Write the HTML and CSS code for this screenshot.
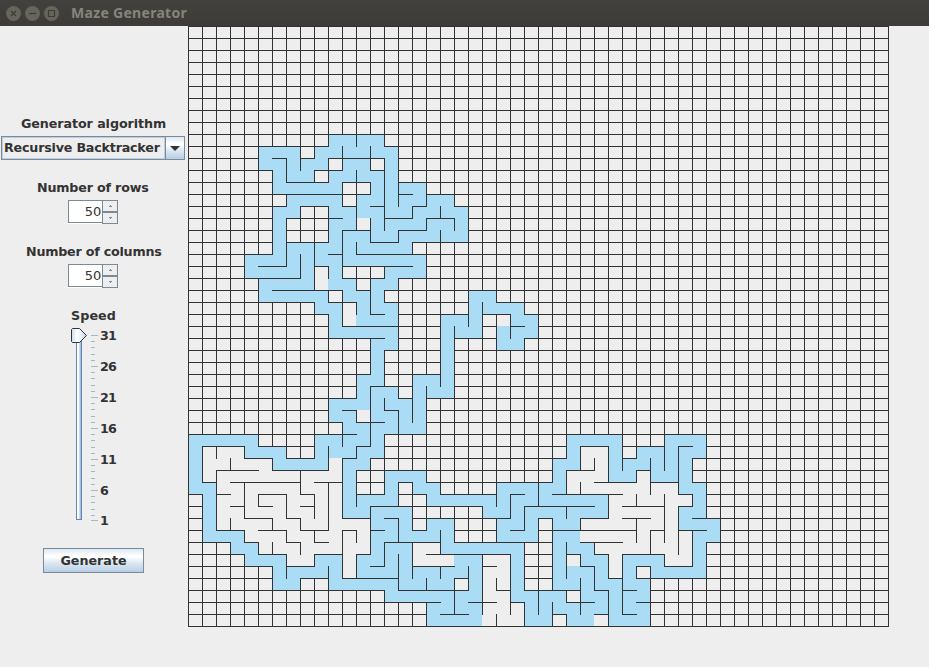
FILE: index.html
```html
<!DOCTYPE html>
<html lang="en">
<head>
<meta charset="utf-8">
<title>Maze Generator</title>
<link rel="stylesheet" href="styles.css">
</head>
<body>
<header class="titlebar">
  <svg class="window-buttons" width="54" height="16" viewBox="0 0 54 16">
    <g class="disc"><circle cx="7.5" cy="7.5" r="7.5"/><circle cx="26.5" cy="7.5" r="7.5"/><circle cx="45.5" cy="7.5" r="7.5"/></g>
    <g class="glyph"><path d="M5 5l5 5M10 5l-5 5"/><path d="M23 7.5h7"/><path d="M42.5 4.5h6v6h-6z"/></g>
  </svg>
  <h1 class="title">Maze Generator</h1>
</header>
<main class="content">
  <section class="controls">
    <label class="label label-algorithm">Generator algorithm</label>
    <div class="combo">
      <span class="combo-value">Recursive Backtracker</span>
      <span class="combo-button"><svg width="10" height="5" viewBox="0 0 10 5"><path d="M0 0h10L5 5z" fill="#333"/></svg></span>
    </div>
    <label class="label label-rows">Number of rows</label>
    <div class="spinner">
      <span class="spinner-value">50</span>
      <span class="spinner-buttons">
        <span class="spinner-button"><svg width="3" height="2"><path d="M1 0h1v1h1v1h-3v-1h1z"/></svg></span>
        <span class="spinner-button"><svg width="3" height="2"><path d="M0 0h3v1h-1v1h-1v-1h-1z"/></svg></span>
      </span>
    </div>
    <label class="label label-columns">Number of columns</label>
    <div class="spinner">
      <span class="spinner-value">50</span>
      <span class="spinner-buttons">
        <span class="spinner-button"><svg width="3" height="2"><path d="M1 0h1v1h1v1h-3v-1h1z"/></svg></span>
        <span class="spinner-button"><svg width="3" height="2"><path d="M0 0h3v1h-1v1h-1v-1h-1z"/></svg></span>
      </span>
    </div>
    <label class="label label-speed">Speed</label>
    <div class="slider">
      <svg class="slider-track" width="28" height="195" viewBox="0 0 28 195">
        <defs>
          <linearGradient id="thumb"><stop offset="0" stop-color="#c8ddf2"/><stop offset=".35" stop-color="#fff"/><stop offset=".6" stop-color="#eef4fa"/><stop offset="1" stop-color="#b8cfe5"/></linearGradient>
          <g id="step"><path d="M20 0h7v1h-7zM20 6h4v1h-4zM20 12h4v1h-4zM20 19h4v1h-4zM20 25h4v1h-4z"/></g>
        </defs>
        <g shape-rendering="crispEdges">
          <path fill="#6382bf" d="M5 8h6v184h-6z"/>
          <path fill="#fff" d="M6 8h2v183h-2z"/>
          <path fill="#c8ddea" d="M8 8h1v183h-1z"/>
          <path fill="#a3c0d6" d="M9 8h1v183h-1z"/>
          <g fill="#a3b8cc">
            <use href="#step" y="7"/><use href="#step" y="38"/><use href="#step" y="69"/><use href="#step" y="100"/><use href="#step" y="131"/><use href="#step" y="162"/>
            <path d="M20 192h7v1h-7z"/>
          </g>
        </g>
        <path fill="url(#thumb)" stroke="#333" d="M1.5 .5h7l7 7-7 7h-7l-1-1v-12z"/>
      </svg>
      <ol class="slider-labels">
        <li>31</li><li>26</li><li>21</li><li>16</li><li>11</li><li>6</li><li>1</li>
      </ol>
    </div>
    <button class="generate" type="button"><span>Generate</span></button>
  </section>
  <svg class="maze" id="maze" width="701" height="601" viewBox="0 0 701 601" shape-rendering="crispEdges"></svg>
</main>
<script src="maze.js"></script>
</body>
</html>
```
FILE: maze.js
```js
const SIZE = 50, CELL_W = 14, CELL_H = 12;

// Current path of the backtracker: start cell, then runs of moves.
const START = [22, 25];
const MOVES = `
D R U R U L U L2 U L D3 L U L D6 L U L D4 L U2 L U L D2 R D L D2 L D L D4 R U R2 U2 R2 D R D R4 D
R U2 R2 D L D2 L D R2 U2 R2 D R U R2 U L4 U R U2 R U2 R3 D3 R U R U R D2 R U3 R2 D L D3 R D2 L D
R2 D L D3 L3 U L2 D2 R D L D R D L2 U3 L U2 L U L U L D4 R U R D2 R D L D L U L U L D2 L U2 L U4
L5 U2 L D L2 U2 L2 D R D L D2 L D R2 U2 R D3 R U R D R U R U R D3 L D R D L3 U R U L4 U L4 U2 L D
L2 D L U2 L2 U L U L2 U4 L U4 R4 D R2 D R3 U2 R D R U R U L U L U R2 U2 R U3 R U L4 U2 L U L4 U
R3 U3 L D2 L3 U R2 U4 R U R3 D R D L D2 L D R D2 R D R D2 R2 U L U2 R U R2 U L5 U2 R D R3 U R2 U
R D R U2 L U L D L D L2 D L U2 L U R U2 L U L D L D L4 U2 L U R2 D2 R U R U R U R D R U R D R D5
R U R U L`;

// Openings between finished cells, by row: columns with no left wall, columns with no top wall.
const OPEN = {
  16: [[], [12]],
  21: [[10], [9]],
  24: [[12], [11]],
  25: [[], [22]],
  32: [[], [12]],
  35: [[3, 29], []],
  36: [[2, 4, 5], [1, 2, 3, 10, 28, 29]],
  37: [[3, 4, 5, 6, 7, 9, 10, 28, 29], [1, 5, 10, 29]],
  38: [[3, 5, 6, 7, 9, 29, 30, 31, 32, 34], [2, 8, 27, 28, 32]],
  39: [[3, 6, 8, 31, 33, 35], [3, 4, 7, 9, 10, 31, 32, 33, 34]],
  40: [[3, 5, 6, 8, 31, 32, 33], [2, 4, 6, 7, 9, 10, 30, 34]],
  41: [[4, 5, 7, 9, 11, 12, 29, 30, 31, 33], [2, 3, 6, 8, 9, 10, 30, 33, 34]],
  42: [[5, 6, 8, 10, 28, 29, 30, 31], [4, 7, 10, 12, 32, 34]],
  43: [[7, 9, 10, 12, 17, 30, 31, 32, 34], [5, 6, 8, 10, 11, 12, 31, 32, 33, 34, 35]],
  44: [[8, 17, 18, 19, 22, 35], [7, 8, 11, 16, 30, 34, 35]],
  45: [[22], [11, 22, 27, 30]],
  46: [[], [21, 22]],
  47: [[22], [21]],
  48: [[22], [22]],
  49: [[21, 23, 29], [21, 22, 23]]
};

const noLeft = new Set(), noTop = new Set();
const key = (c, r) => c + "," + r;
for (const [r, [left, top]] of Object.entries(OPEN)) {
  left.forEach(c => noLeft.add(key(c, r)));
  top.forEach(c => noTop.add(key(c, r)));
}

let [col, row] = START;
let cells = "";
const fill = () => { cells += `M${col * CELL_W} ${row * CELL_H}h${CELL_W}v${CELL_H}h-${CELL_W}z`; };
fill();
for (const run of MOVES.trim().split(/\s+/)) {
  for (let n = Number(run.slice(1) || 1); n > 0; n--) {
    if (run[0] === "R") noLeft.add(key(++col, row));
    if (run[0] === "L") noLeft.add(key(col--, row));
    if (run[0] === "D") noTop.add(key(col, ++row));
    if (run[0] === "U") noTop.add(key(col, row--));
    fill();
  }
}

let walls = "";
for (let r = 0; r <= SIZE; r++) {
  for (let c = 0; c <= SIZE; c++) {
    const at = `M${c * CELL_W} ${r * CELL_H}`;
    if (c < SIZE && !noTop.has(key(c, r))) walls += `${at}h${CELL_W + 1}v1h-${CELL_W + 1}z`;
    if (r < SIZE && !noLeft.has(key(c, r))) walls += `${at}h1v${CELL_H + 1}h-1z`;
  }
}

document.getElementById("maze").innerHTML =
  `<path class="path" d="${cells}"/><path class="walls" d="${walls}"/>`;
```
FILE: styles.css
```css
* { box-sizing: border-box; }

body {
  margin: 0;
  width: 929px;
  height: 667px;
  overflow: hidden;
  background: #eee;
  color: #333;
  font: bold 12.7px/16px "DejaVu Sans", sans-serif;
}

.titlebar {
  display: flex;
  align-items: center;
  height: 26px;
  padding: 0 6px;
  background: linear-gradient(#42413d, #3c3b37);
}

.window-buttons { display: block; margin-top: 1px; }
.disc { fill: #66645b; }
.glyph { fill: none; stroke: #3c3b37; stroke-width: 1.2; }

.title {
  margin: 0 0 0 11px;
  color: #87847b;
  font: bold 14px/26px "Noto Sans", sans-serif;
  letter-spacing: .3px;
}

.content { display: flex; height: 641px; }

.controls {
  display: flex;
  flex-direction: column;
  width: 188px;
  padding-top: 90px;
}

.maze { display: block; flex: none; }
.path { fill: #aadcf5; }
.walls { fill: #333; }

.label { display: block; white-space: nowrap; }
.label-algorithm { margin-left: 21px; letter-spacing: -.08px; }
.label-rows { margin: 20px 0 0 37px; letter-spacing: -.18px; }
.label-columns { margin: 20px 0 0 26px; letter-spacing: -.22px; }
.label-speed { margin: 20px 0 0 71px; letter-spacing: .1px; }

.combo {
  display: flex;
  width: 184px;
  height: 24px;
  margin: 4px 0 0 1px;
  border: 1px solid #7a8a99;
}

.combo-value {
  width: 163px;
  padding-left: 1px;
  border: 1px solid #b8cfe5;
  letter-spacing: -.2px;
  line-height: 20px;
  white-space: nowrap;
}

.combo-button {
  display: flex;
  flex: 1;
  align-items: center;
  justify-content: center;
  border-left: 1px solid #7a8a99;
}

.combo-button,
.generate {
  background: linear-gradient(#dde8f3, #fff 30%, #fff 35%, #dde8f3 60%, #b8cfe5);
}

.spinner {
  display: flex;
  width: 50px;
  height: 24px;
  margin: 4px 0 0 68px;
}

.spinner-value {
  width: 34px;
  height: 23px;
  padding-right: 1px;
  border: 1px solid #7a8a99;
  border-right: 0;
  background: #fff;
  box-shadow: 0 1px #fff;
  font-size: 13px;
  font-weight: normal;
  letter-spacing: -.2px;
  line-height: 21px;
  text-align: right;
}

.spinner-buttons { width: 16px; }

.spinner-button {
  display: flex;
  align-items: center;
  justify-content: center;
  height: 12px;
  border: 1px solid #7a8a99;
}

.spinner-button svg { fill: #7a8a99; }

.slider { display: flex; height: 195px; margin: 4px 0 0 71px; }
.slider-track { display: block; }

.slider-labels {
  display: flex;
  flex-direction: column;
  gap: 15px;
  margin: 0 0 0 1px;
  padding: 0;
  letter-spacing: -.8px;
  list-style: none;
}

.slider-labels li:last-child { margin-top: -1px; }

.generate {
  width: 101px;
  height: 25px;
  margin: 25px 0 0 43px;
  padding: 0;
  border: 1px solid #7a8a99;
  color: inherit;
  font: inherit;
}
```
